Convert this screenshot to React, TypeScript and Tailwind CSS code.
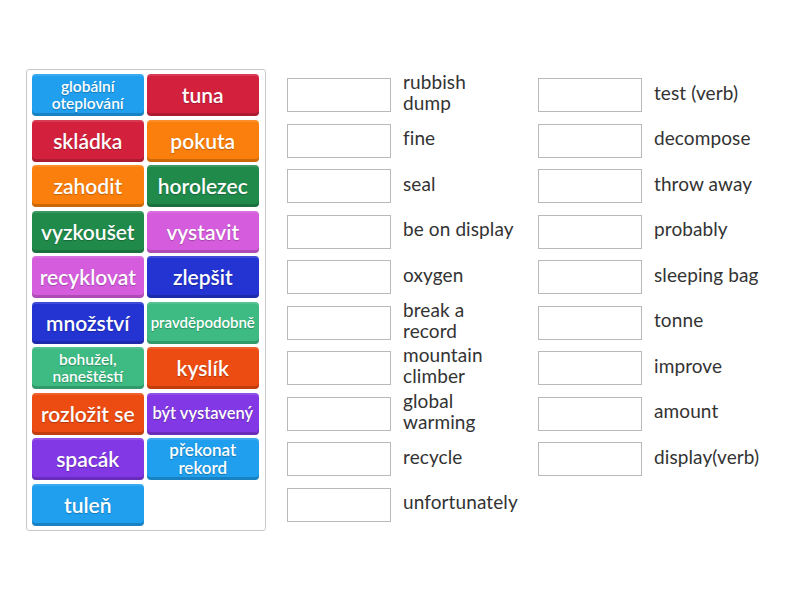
import React from 'react';

// Match-up worksheet: word tiles on the left, blank answer slots on the right

type Tile = { text: string; color: string; size: string };

const tiles: Tile[] = [
  { text: 'globální oteplování', color: 'bg-[#1f9fee]', size: 'text-[15.5px] leading-[17px]' },
  { text: 'tuna', color: 'bg-[#d3213d]', size: 'text-[21px]' },
  { text: 'skládka', color: 'bg-[#d3213d]', size: 'text-[21px]' },
  { text: 'pokuta', color: 'bg-[#fb7f0c]', size: 'text-[21px]' },
  { text: 'zahodit', color: 'bg-[#fb7f0c]', size: 'text-[21px]' },
  { text: 'horolezec', color: 'bg-[#208a4b]', size: 'text-[21px]' },
  { text: 'vyzkoušet', color: 'bg-[#208a4b]', size: 'text-[21px]' },
  { text: 'vystavit', color: 'bg-[#d55cdc]', size: 'text-[21px]' },
  { text: 'recyklovat', color: 'bg-[#d55cdc]', size: 'text-[21px]' },
  { text: 'zlepšit', color: 'bg-[#2434d2]', size: 'text-[21px]' },
  { text: 'množství', color: 'bg-[#2434d2]', size: 'text-[21px]' },
  { text: 'pravděpodobně', color: 'bg-[#3dbb82]', size: 'text-[15px] whitespace-nowrap' },
  { text: 'bohužel, naneštěstí', color: 'bg-[#3dbb82]', size: 'text-[15.5px] leading-[17px]' },
  { text: 'kyslík', color: 'bg-[#ec4b11]', size: 'text-[21px]' },
  { text: 'rozložit se', color: 'bg-[#ec4b11]', size: 'text-[21px] whitespace-nowrap' },
  { text: 'být vystavený', color: 'bg-[#8238e4]', size: 'text-[16.5px] whitespace-nowrap' },
  { text: 'spacák', color: 'bg-[#8238e4]', size: 'text-[21px]' },
  { text: 'překonat rekord', color: 'bg-[#1f9fee]', size: 'text-[17px] leading-[18px]' },
  { text: 'tuleň', color: 'bg-[#1f9fee]', size: 'text-[21px]' },
];

const leftPrompts: React.ReactNode[] = [
  <>rubbish<br />dump</>,
  'fine',
  'seal',
  'be on display',
  'oxygen',
  <>break a<br />record</>,
  <>mountain<br />climber</>,
  <>global<br />warming</>,
  'recycle',
  'unfortunately',
];

const rightPrompts: React.ReactNode[] = [
  'test (verb)',
  'decompose',
  'throw away',
  'probably',
  'sleeping bag',
  'tonne',
  'improve',
  'amount',
  'display(verb)',
];

function WordTile({ tile }: { tile: Tile }) {
  return (
    <div
      className={`flex h-[42px] w-[111.5px] items-center justify-center rounded-[4px] px-0.5 text-center font-semibold text-white shadow-[inset_0_-3px_0_rgba(0,0,0,0.18),inset_0_2px_0_rgba(255,255,255,0.12)] [text-shadow:0_1px_1px_rgba(0,0,0,0.25)] ${tile.color} ${tile.size}`}
    >
      <span>{tile.text}</span>
    </div>
  );
}

function SlotColumn({ prompts }: { prompts: React.ReactNode[] }) {
  return (
    <div className="flex flex-col gap-y-[3.5px]">
      {prompts.map((p, i) => (
        <div key={i} className="flex h-[42px] items-center">
          <div className="h-[34px] w-[104.5px] shrink-0 border border-[#b9b9b9] bg-white" />
          <div className="ml-[12px] -mt-[6px] w-[134.5px] whitespace-nowrap text-[19px] leading-[21px] tracking-[0.1px] text-[#333]">
            {p}
          </div>
        </div>
      ))}
    </div>
  );
}

export default function App() {
  return (
    <div
      className="flex min-h-[600px] w-[800px] items-start bg-white pl-[26px] pt-[69px]"
      style={{ fontFamily: 'Lato, "Open Sans", sans-serif' }}
    >
      <div className="rounded-[3px] border border-[#c8c8c8] py-[4px] pl-[5px] pr-[6px]">
        <div className="grid grid-cols-[111.5px_111.5px] gap-x-[3.5px] gap-y-[3.5px]">
          {tiles.map((t) => (
            <WordTile key={t.text} tile={t} />
          ))}
        </div>
      </div>

      <div className="ml-[21px] mt-[5px] flex">
        <SlotColumn prompts={leftPrompts} />
        <SlotColumn prompts={rightPrompts} />
      </div>
    </div>
  );
}
